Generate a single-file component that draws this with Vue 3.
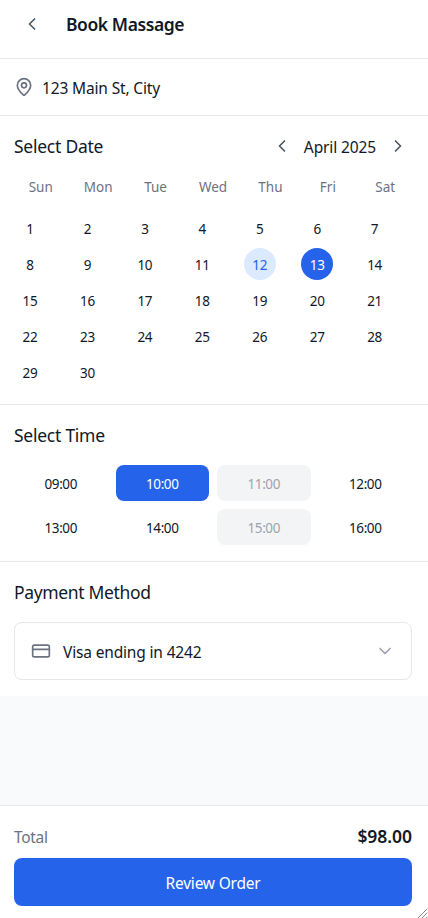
<script setup>
import { ref } from 'vue'

const weekdays = ['Sun', 'Mon', 'Tue', 'Wed', 'Thu', 'Fri', 'Sat']
const today = 12
const selectedDay = ref(13)
const times = ['09:00', '10:00', '11:00', '12:00', '13:00', '14:00', '15:00', '16:00']
const unavailable = ['11:00', '15:00']
const selectedTime = ref('10:00')
</script>

<template>
  <div class="page">
    <header class="header">
      <button class="icon-btn" aria-label="Back">
        <svg width="20" height="20" viewBox="0 0 24 24"><path d="m15 18-6-6 6-6" /></svg>
      </button>
      <h1>Book Massage</h1>
    </header>

    <section class="location">
      <svg width="20" height="20" viewBox="0 0 24 24">
        <path d="M20 10c0 5-5.5 10.2-7.4 11.8a1 1 0 0 1-1.2 0C9.5 20.2 4 15 4 10a8 8 0 0 1 16 0" />
        <circle cx="12" cy="10" r="3" />
      </svg>
      <span>123 Main St, City</span>
    </section>

    <section class="date">
      <div class="date-head">
        <h2>Select Date</h2>
        <div class="month">
          <button class="icon-btn" aria-label="Previous month">
            <svg width="20" height="20" viewBox="0 0 24 24"><path d="m15 18-6-6 6-6" /></svg>
          </button>
          <span>April 2025</span>
          <button class="icon-btn" aria-label="Next month">
            <svg width="20" height="20" viewBox="0 0 24 24"><path d="m9 18 6-6-6-6" /></svg>
          </button>
        </div>
      </div>
      <div class="weekdays">
        <span v-for="d in weekdays" :key="d">{{ d }}</span>
      </div>
      <div class="days">
        <button
          v-for="d in 30"
          :key="d"
          class="day"
          :class="{ today: d === today, selected: d === selectedDay }"
          @click="selectedDay = d"
        >{{ d }}</button>
      </div>
    </section>

    <section class="time">
      <h2>Select Time</h2>
      <div class="slots">
        <button
          v-for="t in times"
          :key="t"
          class="slot"
          :class="{ selected: t === selectedTime }"
          :disabled="unavailable.includes(t)"
          @click="selectedTime = t"
        >{{ t }}</button>
      </div>
    </section>

    <section class="payment">
      <h2>Payment Method</h2>
      <div class="card">
        <svg width="20" height="20" viewBox="0 0 24 24">
          <rect x="2" y="5" width="20" height="14" rx="2" />
          <path d="M2 10h20" />
        </svg>
        <span>Visa ending in 4242</span>
        <svg class="chevron" width="20" height="20" viewBox="0 0 24 24"><path d="m6 9 6 6 6-6" /></svg>
      </div>
    </section>

    <footer class="footer">
      <div class="total">
        <span class="label">Total</span>
        <span class="amount">$98.00</span>
      </div>
      <button class="review">Review Order</button>
      <svg class="grip" width="10" height="10" viewBox="0 0 10 10"><path d="M0 10 9 1M4 10l5-5M8 10l1-1" /></svg>
    </footer>
  </div>
</template>

<style>
body {
  margin: 0;
  overflow: hidden;
}
</style>

<style scoped>
.page {
  display: flex;
  flex-direction: column;
  height: 918px;
  background: #f9fafb;
  color: #111827;
  font-family: "Segoe UI", "Noto Sans", "Open Sans", sans-serif;
  font-size: 16px;
  line-height: 24px;
}
.page * {
  box-sizing: border-box;
}
button {
  margin: 0;
  padding: 0;
  border: 0;
  background: none;
  color: inherit;
  font: inherit;
  letter-spacing: inherit;
  cursor: pointer;
}
svg {
  display: block;
  flex: none;
  fill: none;
  stroke: #6b7280;
  stroke-width: 2;
  stroke-linecap: round;
  stroke-linejoin: round;
}
h1,
h2 {
  margin: 0;
  font-size: 17.5px;
  font-weight: 400;
  line-height: 28px;
}
h2 {
  letter-spacing: -0.25px;
}
section,
.header {
  flex: none;
  padding: 0 16px 0 14px;
  background: #fff;
  border-bottom: 1px solid #e5e7eb;
}
.icon-btn svg {
  stroke: #4b5563;
}
.header {
  display: flex;
  align-items: center;
  gap: 16px;
  height: 59px;
  padding-bottom: 10px;
}
.header .icon-btn {
  padding: 8px;
}
.header h1 {
  font-weight: 600;
  font-size: 17.5px;
  letter-spacing: -0.42px;
}
.location {
  display: flex;
  align-items: center;
  gap: 8px;
  height: 57px;
}
.location span {
  padding-top: 2px;
  font-size: 15.5px;
  letter-spacing: -0.15px;
}
.date {
  height: 289px;
  padding-top: 16px;
}
.date-head {
  display: flex;
  align-items: center;
  justify-content: space-between;
  height: 28px;
}
.month {
  display: flex;
  align-items: center;
  gap: 12px;
  padding-right: 4px;
  font-size: 15.5px;
  letter-spacing: -0.12px;
}
.month span {
  padding-top: 2px;
}
.weekdays,
.days {
  display: grid;
  grid-template-columns: repeat(7, 1fr);
  gap: 4px;
  font-size: 13.5px;
  line-height: 20px;
}
.weekdays {
  margin-top: 17px;
  color: #6b7280;
  text-align: center;
}
.days {
  margin-top: 15px;
}
.day {
  width: 32px;
  height: 32px;
  padding-top: 2px;
  border-radius: 50%;
  font-size: 13.5px;
  letter-spacing: -0.3px;
}
.day.today {
  background: #dbeafe;
  color: #2563eb;
}
.day.selected {
  background: #2563eb;
  color: #fff;
}
.time {
  height: 157px;
  padding-top: 16px;
}
.slots {
  display: grid;
  grid-template-columns: repeat(4, 1fr);
  gap: 8px;
  margin-top: 16px;
}
.slot {
  height: 36px;
  padding-top: 2px;
  border-radius: 8px;
  font-size: 13.5px;
  letter-spacing: -0.4px;
}
.slot.selected {
  background: #2563eb;
  color: #fff;
}
.slot:disabled {
  background: #f3f4f6;
  color: #9ca3af;
}
.payment {
  height: 134px;
  padding-top: 16px;
  border-bottom: 0;
}
.payment h2 {
  letter-spacing: -0.35px;
}
.card {
  display: flex;
  align-items: center;
  gap: 12px;
  height: 58px;
  margin-top: 16px;
  padding: 0 16px;
  border: 1px solid #e5e7eb;
  border-radius: 8px;
}
.card span {
  padding-top: 2px;
  font-size: 15.5px;
  letter-spacing: -0.16px;
}
.card .chevron {
  margin-left: auto;
  stroke: #9ca3af;
}
.footer {
  position: relative;
  height: 113px;
  margin-top: auto;
  padding: 16px 16px 12px 14px;
  background: #fff;
  border-top: 1px solid #e5e7eb;
}
.total {
  display: flex;
  align-items: center;
  justify-content: space-between;
  height: 28px;
  margin-bottom: 8px;
}
.label {
  padding-top: 2px;
  color: #6b7280;
  font-size: 15.5px;
  letter-spacing: -0.3px;
}
.amount {
  font-size: 17.5px;
  font-weight: 600;
  letter-spacing: -0.05px;
}
.review {
  width: 100%;
  height: 48px;
  padding-top: 2px;
  border-radius: 8px;
  background: #2563eb;
  color: #fff;
  font-size: 15.5px;
  letter-spacing: -0.22px;
}
.grip {
  position: absolute;
  right: 0;
  bottom: 0;
  stroke: #8a8a8a;
  stroke-width: 1;
}
</style>
